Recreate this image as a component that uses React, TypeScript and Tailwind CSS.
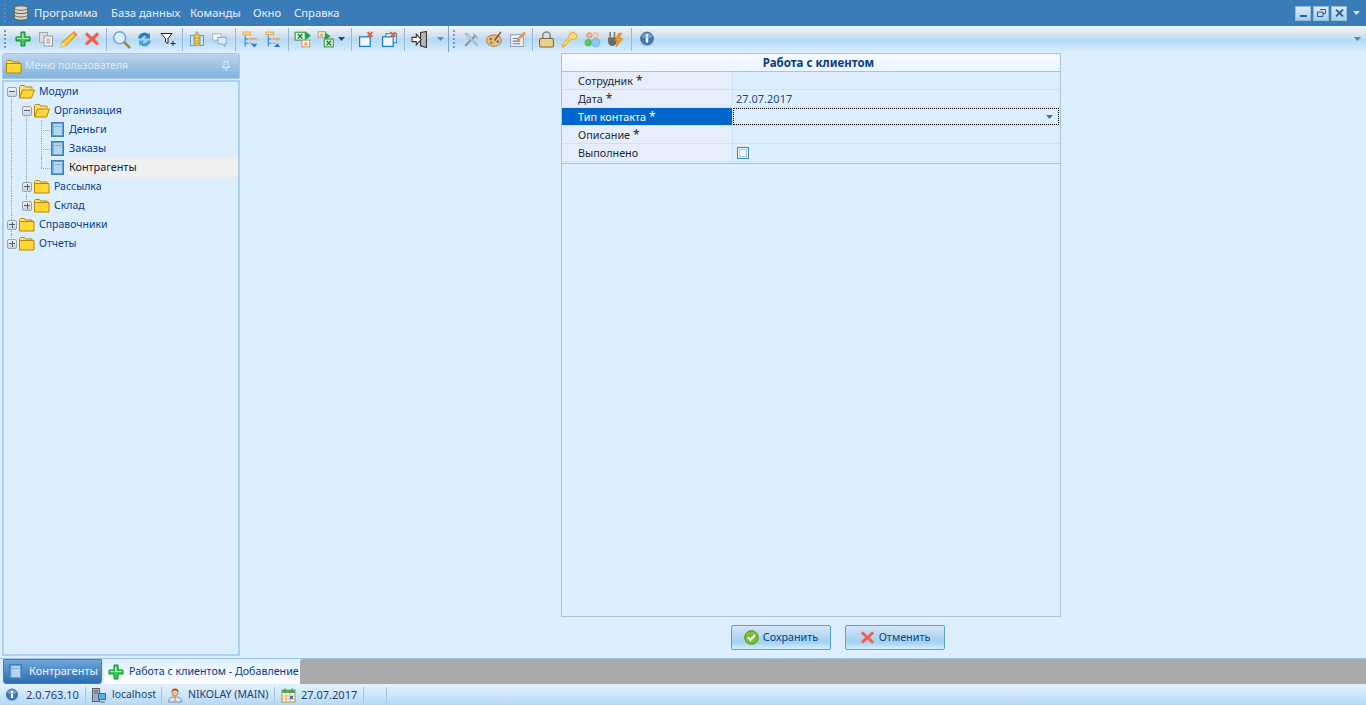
import React from 'react';

const font = "[font-family:'Noto_Sans',Arial,sans-serif]";

// small hand drawn icons, all on a 16x16 grid
function Svg({ children, size = 16 }: { children: React.ReactNode; size?: number }) {
  return (
    <svg width={size} height={size} viewBox="0 0 16 16" className="shrink-0">
      {children}
    </svg>
  );
}

const PlusIcon = ({ size = 16 }: { size?: number }) => (
  <Svg size={size}>
    <path d="M6 1h4v5h5v4h-5v5H6v-5H1V6h5z" fill="#35cf55" stroke="#0d8a30" strokeWidth="1" />
    <path d="M7 2.500h1.500V7H14v1H7zM2 7h4v1H2z" fill="#a8f0b4" />
  </Svg>
);
const CopyIcon = () => (
  <Svg>
    <rect x="1.500" y="1.500" width="8" height="10" fill="#dcdcdc" stroke="#a8a8a8" />
    <rect x="6" y="5" width="8.500" height="10" fill="#f4f4f4" stroke="#9a9a9a" />
    <path d="M8 8h4.500M8 10h4.500M8 12h4.500" stroke="#a0a0a0" />
  </Svg>
);
const PencilIcon = () => (
  <Svg size={18}>
    <path d="M12.500 1.500l2.500 2.500L5 14 1 15l1-4z" fill="#f8cc48" stroke="#d69a25" />
    <path d="M12.500 1.500l2.500 2.500-1.500 1.500L11 3z" fill="#ee8f78" />
    <path d="M2 11l3 3-4 1z" fill="#f5dfb8" />
  </Svg>
);
const CrossIcon = ({ size = 16 }: { size?: number }) => (
  <Svg size={size}>
    <path d="M3 1.500L8 6l5-4.500L15 3.500 10.500 8 15 12.500 13 14.500 8 10l-5 4.500L1 12.500 5.500 8 1 3.500z" fill="#f2574c" stroke="#e89a8c" strokeWidth=".6" />
  </Svg>
);
const SearchIcon = () => (
  <Svg size={19}>
    <circle cx="6.500" cy="6.500" r="5" fill="#d8eefc" stroke="#6aa5d4" strokeWidth="1.200" />
    <path d="M3.500 6a3 3 0 0 1 3-3" fill="none" stroke="#fff" />
    <path d="M10.500 10.500l4 4" stroke="#a9824f" strokeWidth="2.200" strokeLinecap="round" />
  </Svg>
);
const RefreshIcon = () => (
  <Svg size={17}>
    <rect x="3" y="3" width="10" height="10" rx="2" fill="#a8d6f2" />
    <path d="M2 7a6 6 0 0 1 10-4l1-1.500V7H8l2-2a3.500 3.500 0 0 0-5 2z" fill="#2b7cc4" />
    <path d="M14 9a6 6 0 0 1-10 4l-1 1.500V9h5l-2 2a3.500 3.500 0 0 0 5-2z" fill="#4c9ed8" />
  </Svg>
);
const FilterIcon = () => (
  <Svg>
    <path d="M1 2.500h11L8 7.500v5L5.500 11V7.500z" fill="#fff" stroke="#222" />
    <path d="M10.500 12.500h5M13 10v5" stroke="#222" />
  </Svg>
);
const ColumnIcon = () => (
  <Svg>
    <path d="M8 0l2 2.500H6z" fill="#7fa8d8" />
    <rect x="1.500" y="4.500" width="3.500" height="10" fill="#cfe4f7" stroke="#5f9fd0" />
    <rect x="6" y="3.500" width="4" height="11" fill="#f6d860" stroke="#d09a20" />
    <rect x="11" y="4.500" width="3.500" height="10" fill="#cfe4f7" stroke="#5f9fd0" />
    <path d="M6 7h4M6 10h4M6 12.500h4" stroke="#d09a20" />
  </Svg>
);
const ChatIcon = () => (
  <Svg size={17}>
    <path d="M1.500 2.500h8v6H5L3 10.500V8.500H1.500z" fill="#f4f8fb" stroke="#a0b8cc" />
    <path d="M6.500 6h8v6h-1.500v2.500L10.500 12h-4z" fill="#dcebf7" stroke="#8fb2d0" />
  </Svg>
);
const ExpandIcon = ({ up }: { up?: boolean }) => (
  <Svg size={17}>
    <rect x="1" y="1" width="7" height="2.500" fill="#fbe3a8" stroke="#e0a040" strokeWidth=".8" />
    <path d="M3 4v10.500M3 7.500h3M3 11.500h3" stroke="#3f86c8" />
    <path d="M7 7.500h7M7 11.500h3" stroke="#e0a040" strokeWidth="1.200" />
    <path d={up ? 'M8.500 15h6L11.500 11.500z' : 'M8.500 12h6L11.500 15.500z'} fill="#2f78c0" />
  </Svg>
);
const ExcelInIcon = () => (
  <Svg size={18}>
    <rect x="1" y="2" width="9" height="7" fill="#e4f4e4" stroke="#3f9a4f" />
    <path d="M3.500 3.500l4 4M7.500 3.500l-4 4" stroke="#1f7a35" strokeWidth="1.200" />
    <path d="M10 1l5 4-5 4z" fill="#22a04a" />
    <rect x="7" y="9" width="7" height="6" fill="#f7f0dc" stroke="#b0a890" />
    <path d="M10.500 10l2 3.500h-4z" fill="#f0a830" />
  </Svg>
);
const ExcelOutIcon = () => (
  <Svg size={18}>
    <rect x="1" y="1.500" width="6.500" height="5" fill="#f7f0dc" stroke="#b0a890" />
    <path d="M4 2.500l2 3H2z" fill="#f0a830" />
    <path d="M7 2l5 3.500L7 9z" fill="#22a04a" />
    <rect x="6.500" y="8" width="8" height="7" fill="#e4f4e4" stroke="#3f9a4f" />
    <path d="M8.500 9.500l4 4M12.500 9.500l-4 4" stroke="#1f7a35" strokeWidth="1.200" />
  </Svg>
);
const WinCloseIcon = ({ two }: { two?: boolean }) => (
  <Svg size={17}>
    {two && <rect x="4.500" y="2.500" width="10" height="8.500" fill="#e4f2fc" stroke="#2f86cc" />}
    <rect x="1.500" y="5.500" width="10" height="9" fill="#f2f9fe" stroke="#1f7fcc" strokeWidth="1.200" />
    <path d="M9 1l4.500 4.500M13.500 1L9 5.500" stroke="#e85a3c" strokeWidth="1.800" />
  </Svg>
);
const ExitIcon = () => (
  <Svg size={17}>
    <path d="M9 1.500l5.500-1v15L9 14z" fill="#b8b8b8" stroke="#333" />
    <path d="M1 6h4V3l4.500 5L5 13v-3H1z" fill="#fff" stroke="#333" />
  </Svg>
);
const ToolsIcon = () => (
  <Svg size={17}>
    <path d="M2 14L12 4" stroke="#8a9aa8" strokeWidth="2" />
    <path d="M10 1.500a3.500 3.500 0 0 0 4.500 4.500L12.500 5l-1-1z" fill="#8a9aa8" />
    <path d="M2 2l3 1 9 10-1 1L3.500 5z" fill="#c0ccd6" stroke="#8a9aa8" strokeWidth=".6" />
  </Svg>
);
const PaletteIcon = () => (
  <Svg size={17}>
    <ellipse cx="7.500" cy="9" rx="7" ry="5.500" fill="#e6bd7f" stroke="#b98a4a" />
    <circle cx="4.500" cy="7.500" r="1.200" fill="#e2483c" />
    <circle cx="5" cy="11" r="1.200" fill="#3fa84a" />
    <circle cx="11" cy="10" r="1.200" fill="#2f7fd0" />
    <path d="M8 9l6-8" stroke="#8a5a30" strokeWidth="1.500" />
  </Svg>
);
const FormEditIcon = () => (
  <Svg size={17}>
    <rect x="1.500" y="3.500" width="12" height="11" fill="#f4f6fb" stroke="#8fa0c0" />
    <path d="M3.500 7h5M3.500 9.500h7M3.500 12h7" stroke="#5f78b0" />
    <path d="M8 7l6-6 1.500 1.500-6 6H8z" fill="#f0a830" stroke="#b87a20" strokeWidth=".5" />
  </Svg>
);
const LockIcon = () => (
  <Svg size={17}>
    <path d="M4.500 7V4.500a3.500 3.500 0 0 1 7 0V7" fill="none" stroke="#8a8a8a" strokeWidth="1.500" />
    <rect x="1.500" y="7" width="13" height="8" rx="1" fill="#ecd08a" stroke="#7a6a3a" />
  </Svg>
);
const KeyIcon = () => (
  <Svg size={17}>
    <path d="M9 2l3-1 3 3-1 3-3 1-1-.5L4 13.500H2.500v1.500H1v-2L7.500 6.500 7 5.500z" fill="#fbdc7c" stroke="#e8b040" />
  </Svg>
);
const UsersIcon = () => (
  <Svg size={17}>
    <circle cx="5" cy="4" r="2.500" fill="#f4b0a0" stroke="#d88070" strokeWidth=".6" />
    <circle cx="11" cy="4" r="2.500" fill="#f8d8b0" stroke="#d8a070" strokeWidth=".6" />
    <circle cx="4" cy="11" r="3.500" fill="#5cc05c" />
    <circle cx="11" cy="11" r="4" fill="#8cc8f0" stroke="#5fa0d0" strokeWidth=".6" />
  </Svg>
);
const PlugIcon = () => (
  <Svg size={17}>
    <path d="M3 1v5M7 1v5" stroke="#777" strokeWidth="1.500" />
    <path d="M1 6h8v4a4 4 0 0 1-8 0z" fill="#6a6a6a" />
    <path d="M11 2l-4 7h3l-1.500 6L15 7h-3.500L14 2z" fill="#f49a20" stroke="#d87010" strokeWidth=".5" />
  </Svg>
);
const InfoIcon = ({ size = 16 }: { size?: number }) => (
  <Svg size={size}>
    <ellipse cx="8" cy="13" rx="7" ry="2.500" fill="#b9d4ec" />
    <circle cx="8" cy="7.500" r="6.500" fill="#3f78b4" stroke="#26568c" strokeWidth=".6" />
    <path d="M2.500 6a5.500 4 0 0 1 11 0 8 4 0 0 1-11 0z" fill="#8fb2d4" opacity=".7" />
    <circle cx="8" cy="4.500" r="1.300" fill="#fff" />
    <rect x="6.800" y="6.500" width="2.400" height="5" fill="#fff" />
  </Svg>
);
const DbIcon = () => (
  <Svg size={18}>
    <path d="M2 3.500C2 1 14 1 14 3.500v9C14 15 2 15 2 12.500z" fill="#d8d4c8" stroke="#55554f" strokeWidth=".8" />
    <path d="M2 4c2 2 10 2 12 0M2 7c2 2 10 2 12 0M2 10c2 2 10 2 12 0" fill="none" stroke="#66645c" strokeWidth=".9" />
  </Svg>
);
const FolderIcon = ({ open }: { open?: boolean }) => (
  <svg width={16} height={15} viewBox="0 0 16 15" className="shrink-0">
    <path d="M.5 14V2.500L1.500 1.500h4l1 1.500h6.500v2" fill="#ffe07a" stroke="#b98600" />
    {open ? (
      <path d="M.5 14L3.500 6h12L12.500 14z" fill="#ffd838" stroke="#b98600" />
    ) : (
      <path d="M.5 14V4.500h14.500V14z" fill="#ffd838" stroke="#b98600" />
    )}
  </svg>
);
const BookIcon = () => (
  <svg width={13} height={15} viewBox="0 0 13 15" className="shrink-0">
    <rect x=".5" y=".5" width="12" height="14" fill="#5f9ed2" stroke="#3f7fb8" />
    <rect x="2.500" y="2" width="8.500" height="11" fill="#b4d6ef" />
    <path d="M3.500 4.500h6.500" stroke="#7fb0da" />
  </svg>
);

const Sep = ({ className = 'mx-[3px]' }: { className?: string }) => (
  <div className={`w-px h-[23px] bg-[#93b8d8] shrink-0 ${className}`} />
);
const Tool = ({ children }: { children: React.ReactNode }) => (
  <div className="w-[23px] h-full flex items-center justify-center shrink-0">{children}</div>
);
const Grip = ({ className = '' }: { className?: string }) => (
  <div className={`flex flex-col gap-[2px] shrink-0 ${className}`}>
    {[0, 1, 2, 3, 4].map((i) => (
      <div key={i} className="w-[2px] h-[2px] bg-[#6f9cc6]" />
    ))}
  </div>
);
const Caret = ({ className = '' }: { className?: string }) => (
  <svg width={7} height={4} viewBox="0 0 7 4" className={`shrink-0 ${className}`}>
    <path d="M0 0h7L3.500 4z" fill="currentColor" />
  </svg>
);

function Toolbar() {
  return (
    <div className="h-[26px] shrink-0 flex items-center pl-[4px] rounded-l-[4px] rounded-r-[3px] bg-[linear-gradient(to_bottom,#f2f7fb_0%,#cbdcec_46%,#b4d9f5_50%,#d8edfd_100%)]">
      <Grip className="mr-[5px]" />
      <Tool><PlusIcon /></Tool>
      <Tool><CopyIcon /></Tool>
      <Tool><PencilIcon /></Tool>
      <Tool><CrossIcon /></Tool>
      <Sep className="ml-[3px] mr-[3px]" />
      <Tool><SearchIcon /></Tool>
      <Tool><RefreshIcon /></Tool>
      <Tool><FilterIcon /></Tool>
      <Sep className="ml-[3px] mr-[2px]" />
      <Tool><ColumnIcon /></Tool>
      <Tool><ChatIcon /></Tool>
      <Sep className="ml-[4px] mr-[3px]" />
      <Tool><ExpandIcon /></Tool>
      <Tool><ExpandIcon up /></Tool>
      <Sep className="ml-[3px] mr-[2px]" />
      <Tool><ExcelInIcon /></Tool>
      <Tool><ExcelOutIcon /></Tool>
      <Caret className="text-[#1f4f8f] ml-[1px] mr-[2px]" />
      <Sep className="ml-[4px] mr-[3px]" />
      <Tool><WinCloseIcon /></Tool>
      <Tool><WinCloseIcon two /></Tool>
      <Sep className="mx-[3px]" />
      <Tool><ExitIcon /></Tool>
      <div className="w-[16px] flex justify-end shrink-0">
        <Caret className="text-[#5f8fc0] mr-[3px]" />
      </div>
      <div className="w-[1px] h-full bg-[#7aa3c8] ml-[1px] mr-[4px]" />
      <Grip />
      <div className="w-[5px]" />
      <Tool><ToolsIcon /></Tool>
      <Tool><PaletteIcon /></Tool>
      <Tool><FormEditIcon /></Tool>
      <Sep className="ml-[3px] mr-[2px]" />
      <Tool><LockIcon /></Tool>
      <Tool><KeyIcon /></Tool>
      <Tool><UsersIcon /></Tool>
      <Tool><PlugIcon /></Tool>
      <Sep className="ml-[4px] mr-[3px]" />
      <Tool><InfoIcon /></Tool>
      <div className="flex-1" />
      <Caret className="text-[#4f86be] mr-[5px]" />
    </div>
  );
}

function MenuBar() {
  const items = [
    ['Программа', 'w-[77px]'],
    ['База данных', 'w-[79px]'],
    ['Команды', 'w-[63px]'],
    ['Окно', 'w-[41px]'],
    ['Справка', 'w-[60px]'],
  ];
  return (
    <div className="h-[26px] bg-[#3a7cb8] flex items-center pl-[4px] pr-[4px] shrink-0">
      <Grip className="mr-[6px] opacity-50" />
      <DbIcon />
      <div className="w-[4px]" />
      {items.map(([label, w]) => (
        <div key={label} className={`${w} text-[11.3px] text-[#e6f0fa] whitespace-nowrap`}>
          {label}
        </div>
      ))}
      <div className="flex-1" />
      <div className="flex items-center gap-[2px]">
        {['min', 'restore', 'close'].map((kind) => (
          <div
            key={kind}
            className="w-[16px] h-[15px] border border-[#8fbce2] bg-gradient-to-b from-[#dcecf9] to-[#a9cfef] flex items-center justify-center"
          >
            {kind === 'min' && <div className="w-[7px] h-[2px] mt-[5px] bg-[#2f5f92]" />}
            {kind === 'restore' && (
              <svg width={9} height={8} viewBox="0 0 9 8">
                <path d="M3 .5h5.500v4H6M.5 3h5.500v4.500H.500z" fill="none" stroke="#2f5f92" />
              </svg>
            )}
            {kind === 'close' && (
              <svg width={9} height={8} viewBox="0 0 9 8">
                <path d="M1 .5l7 7M8 .5l-7 7" stroke="#2f5f92" strokeWidth="1.800" />
              </svg>
            )}
          </div>
        ))}
      </div>
      <Caret className="text-[#cfe2f3] ml-[6px] mr-[2px]" />
    </div>
  );
}

type Node = {
  label: string;
  level: 0 | 1 | 2;
  state?: 'open' | 'closed';
  active?: boolean;
  // which vertical guides run through the row
  line0?: 'full' | 'top' | 'bottom';
  line1?: 'full' | 'top' | 'bottom';
  line2?: 'full' | 'top';
};

const tree: Node[] = [
  { label: 'Модули', level: 0, state: 'open', line0: 'bottom' },
  { label: 'Организация', level: 1, state: 'open', line0: 'full', line1: 'bottom' },
  { label: 'Деньги', level: 2, line0: 'full', line1: 'full', line2: 'full' },
  { label: 'Заказы', level: 2, line0: 'full', line1: 'full', line2: 'full' },
  { label: 'Контрагенты', level: 2, active: true, line0: 'full', line1: 'full', line2: 'top' },
  { label: 'Рассылка', level: 1, state: 'closed', line0: 'full', line1: 'full' },
  { label: 'Склад', level: 1, state: 'closed', line0: 'full', line1: 'top' },
  { label: 'Справочники', level: 0, state: 'closed', line0: 'full' },
  { label: 'Отчеты', level: 0, state: 'closed', line0: 'top' },
];

const guideV = 'absolute w-0 border-l border-dotted border-[#8fa8bd]';
const guideSpan = (v?: string) =>
  v === 'full' ? 'top-0 bottom-0' : v === 'top' ? 'top-0 h-[10px]' : v === 'bottom' ? 'top-[10px] bottom-0' : 'hidden';

const Expander = ({ open }: { open?: boolean }) => (
  <div className="relative z-10 w-[10px] h-[10px] rounded-[2px] border border-[#98a4ae] bg-gradient-to-b from-[#eef1f4] to-[#cbd3db] flex items-center justify-center shrink-0">
    <div className="absolute w-[6px] h-px bg-[#4f5f6f]" />
    {!open && <div className="absolute w-px h-[6px] bg-[#4f5f6f]" />}
  </div>
);

function TreeRow({ node }: { node: Node }) {
  const pad = node.level === 0 ? 'pl-[3px]' : node.level === 1 ? 'pl-[18px]' : 'pl-[47px]';
  return (
    <div className={`relative h-[19px] flex items-center ${pad}`}>
      <span className={`${guideV} left-[7px] ${guideSpan(node.line0)}`} />
      <span className={`${guideV} left-[22px] ${guideSpan(node.line1)}`} />
      <span className={`${guideV} left-[37px] ${guideSpan(node.line2)}`} />
      {node.level === 2 && <span className="absolute left-[37px] top-[10px] w-[9px] border-t border-dotted border-[#8fa8bd]" />}
      {node.state && <Expander open={node.state === 'open'} />}
      {node.level === 2 ? (
        <>
          <BookIcon />
          <div
            className={`ml-[4px] flex-1 h-full flex items-center pl-[1px] text-[10.8px] whitespace-nowrap ${
              node.active ? 'bg-[#f0f0f0] text-[#14202e]' : 'text-[#0b3c8c]'
            }`}
          >
            {node.label}
          </div>
        </>
      ) : (
        <>
          <div className="ml-[2px]">
            <FolderIcon open={node.state === 'open'} />
          </div>
          <div className="ml-[4px] text-[10.5px] text-[#0b3c8c] whitespace-nowrap">{node.label}</div>
        </>
      )}
    </div>
  );
}

function Sidebar() {
  return (
    <div className="w-[240px] shrink-0 flex flex-col pl-[2px] pt-[1px] pb-[2px]">
      <div className="h-[26px] rounded-t-[3px] border border-[#a6c8e6] bg-gradient-to-b from-[#bcd6ec] via-[#9ec2e3] to-[#7fb3e0] flex items-center pl-[3px] pr-[9px]">
        <FolderIcon />
        <div className="ml-[3px] text-[10.5px] text-[#dcebf8]">Меню пользователя</div>
        <div className="flex-1" />
        <svg width={8} height={10} viewBox="0 0 8 10">
          <path d="M2 .5h4v5h1.500v1H.500v-1H2zM4 6.500V10" fill="none" stroke="#dcebf8" />
        </svg>
      </div>
      <div className="mt-[1px] flex-1 border-2 border-[#b0cfea]">
        <div className="h-full">
          {tree.map((node) => (
            <TreeRow key={node.label} node={node} />
          ))}
        </div>
      </div>
    </div>
  );
}

function FormRow({ label, star, selected, children }: { label: string; star?: boolean; selected?: boolean; children?: React.ReactNode }) {
  return (
    <div className="h-[18px] flex border-b border-[#cbe2f6] box-border">
      <div
        className={`w-[171px] shrink-0 pl-[16px] pt-px flex items-center text-[10.8px] whitespace-nowrap border-r border-[#cbe2f6] ${
          selected ? 'bg-[#0066cc] text-white' : 'bg-[#e6eefb] text-[#1a2a3a]'
        }`}
      >
        {label}
        {star && <span className="ml-[3px] text-[12px]">*</span>}
      </div>
      <div className="flex-1 flex items-center">{children}</div>
    </div>
  );
}

function FormPanel() {
  return (
    <div className="flex-1 flex flex-col items-start min-w-0 pl-[321px] pt-[1px] pb-[8px]">
      <div className="w-[500px] flex-1 border border-[#a3c3df] flex flex-col">
        <div className="h-[18px] pl-[15px] bg-gradient-to-b from-[#f5faff] to-[#ebf5ff] border-b border-[#a3c3df] flex items-center justify-center text-[11.5px] font-bold text-[#0b3c7c]">
          Работа с клиентом
        </div>
        <FormRow label="Сотрудник" star />
        <FormRow label="Дата" star>
          <span className="pl-[3px] pt-px text-[11px] text-[#1c4a86]">27.07.2017</span>
        </FormRow>
        <FormRow label="Тип контакта" star selected>
          <div className="h-full flex-1 mr-px border border-dotted border-black flex items-center justify-end pr-[5px]">
            <Caret className="text-[#1f7cc4]" />
          </div>
        </FormRow>
        <FormRow label="Описание" star />
        <FormRow label="Выполнено">
          <div className="ml-[4px] mt-px w-[12px] h-[12px] border border-[#3f86c4] bg-[#eef5fc] p-px">
            <div className="w-full h-full border border-[#b5cde3]" />
          </div>
        </FormRow>
        <div className="h-px bg-[#ddefff] border-b border-[#a3c3df] box-content" />
      </div>
      <div className="ml-[170px] mt-[8px] flex gap-[14px]">
        <FormButton label="Сохранить">
          <svg width={15} height={15} viewBox="0 0 15 15">
            <circle cx="7.500" cy="7.500" r="6.800" fill="#7ac030" stroke="#4f9020" />
            <path d="M4 7.500l2.500 2.500L11 5" fill="none" stroke="#fff" strokeWidth="2" />
          </svg>
        </FormButton>
        <FormButton label="Отменить">
          <CrossIcon size={15} />
        </FormButton>
      </div>
    </div>
  );
}

function FormButton({ label, children }: { label: string; children: React.ReactNode }) {
  return (
    <div className="w-[100px] h-[25px] rounded-[2px] border border-[#5a9fd8] bg-[linear-gradient(to_bottom,#d4e6f6_0%,#b8d9f2_40%,#a2d2f2_70%,#d4eefc_100%)] flex items-center justify-center gap-[4px] text-[10.8px] text-[#0e3e8c]">
      {children}
      <span>{label}</span>
    </div>
  );
}

function TabBar() {
  return (
    <div className="h-[27px] shrink-0 flex items-start border-t border-[#9cc2e6] bg-[#ddefff]">
      <div className="ml-[3px] w-[99px] h-[25px] rounded-b-[3px] border border-[#3f7fbf] bg-gradient-to-b from-[#6ea6d8] to-[#2a6db2] flex items-center pl-[5px] gap-[7px] text-[11px] text-[#edf5fc] whitespace-nowrap">
        <BookIcon />
        Контрагенты
      </div>
      <div className="ml-[2px] w-[196px] h-[25px] rounded-b-[3px] bg-gradient-to-b from-[#ddefff] to-white flex items-center pl-[4px] gap-[5px] text-[10.7px] text-[#0b3c8c] whitespace-nowrap">
        <PlusIcon />
        Работа с клиентом - Добавление
      </div>
      <div className="flex-1 h-[25px] rounded-tl-[3px] bg-[#a9a9a9]" />
    </div>
  );
}

function StatusBar() {
  const sep = 'w-px h-[16px] bg-[#a5c6e2] shrink-0';
  return (
    <div className="h-[20px] shrink-0 flex items-center bg-gradient-to-b from-[#e3f1fc] to-[#b7d9f4] text-[11px] text-[#163f7c] whitespace-nowrap">
      <div className="w-[85px] flex items-center pl-[5px] gap-[7px]">
        <InfoIcon size={14} />
        2.0.763.10
      </div>
      <div className={sep} />
      <div className="w-[75px] flex items-center pl-[5px] gap-[5px] text-[10.4px]">
        <svg width={16} height={16} viewBox="0 0 16 16" className="shrink-0">
          <rect x="1.500" y="1.500" width="7" height="13" fill="#a5aeb8" stroke="#5a6068" />
          <path d="M3 4h4M3 6h4" stroke="#5a6068" />
          <rect x="7.500" y="6.500" width="7" height="6" fill="#58b0e8" stroke="#2f6fa8" />
          <path d="M9 15h5" stroke="#5a6068" />
        </svg>
        localhost
      </div>
      <div className={sep} />
      <div className="w-[112px] flex items-center pl-[5px] gap-[5px] text-[10.5px]">
        <svg width={16} height={16} viewBox="0 0 16 16" className="shrink-0">
          <path d="M4.500 5a3.500 3.500 0 0 1 7 0z" fill="#8a5a2a" />
          <circle cx="8" cy="6" r="3" fill="#f4c088" stroke="#a86a30" strokeWidth=".6" />
          <path d="M1.500 15c0-4 3-5 6.500-5s6.500 1 6.500 5z" fill="#dfe6ee" stroke="#7888a0" />
          <path d="M8 10v4" stroke="#d08040" />
        </svg>
        NIKOLAY (MAIN)
      </div>
      <div className={sep} />
      <div className="w-[88px] flex items-center pl-[6px] gap-[5px]">
        <svg width={15} height={15} viewBox="0 0 15 15" className="shrink-0">
          <rect x="1" y="2" width="13" height="12" fill="#fff" stroke="#b89040" />
          <rect x="1" y="2" width="13" height="3" fill="#58a858" />
          <path d="M4 .5v3M11 .5v3" stroke="#3a7a3a" />
          <path d="M1 8h13M1 11h13M5 5v9M9 5v9" stroke="#f0b040" />
          <rect x="9" y="8" width="3" height="3" fill="#2f7fd0" />
        </svg>
        27.07.2017
      </div>
      <div className={sep} />
      <div className="w-[22px]" />
      <div className={sep} />
    </div>
  );
}

export default function App() {
  return (
    <div className={`w-[1366px] h-[705px] overflow-hidden flex flex-col bg-[#ddefff] ${font}`}>
      <MenuBar />
      <Toolbar />
      <div className="flex-1 flex min-h-0">
        <Sidebar />
        <FormPanel />
      </div>
      <TabBar />
      <StatusBar />
    </div>
  );
}
